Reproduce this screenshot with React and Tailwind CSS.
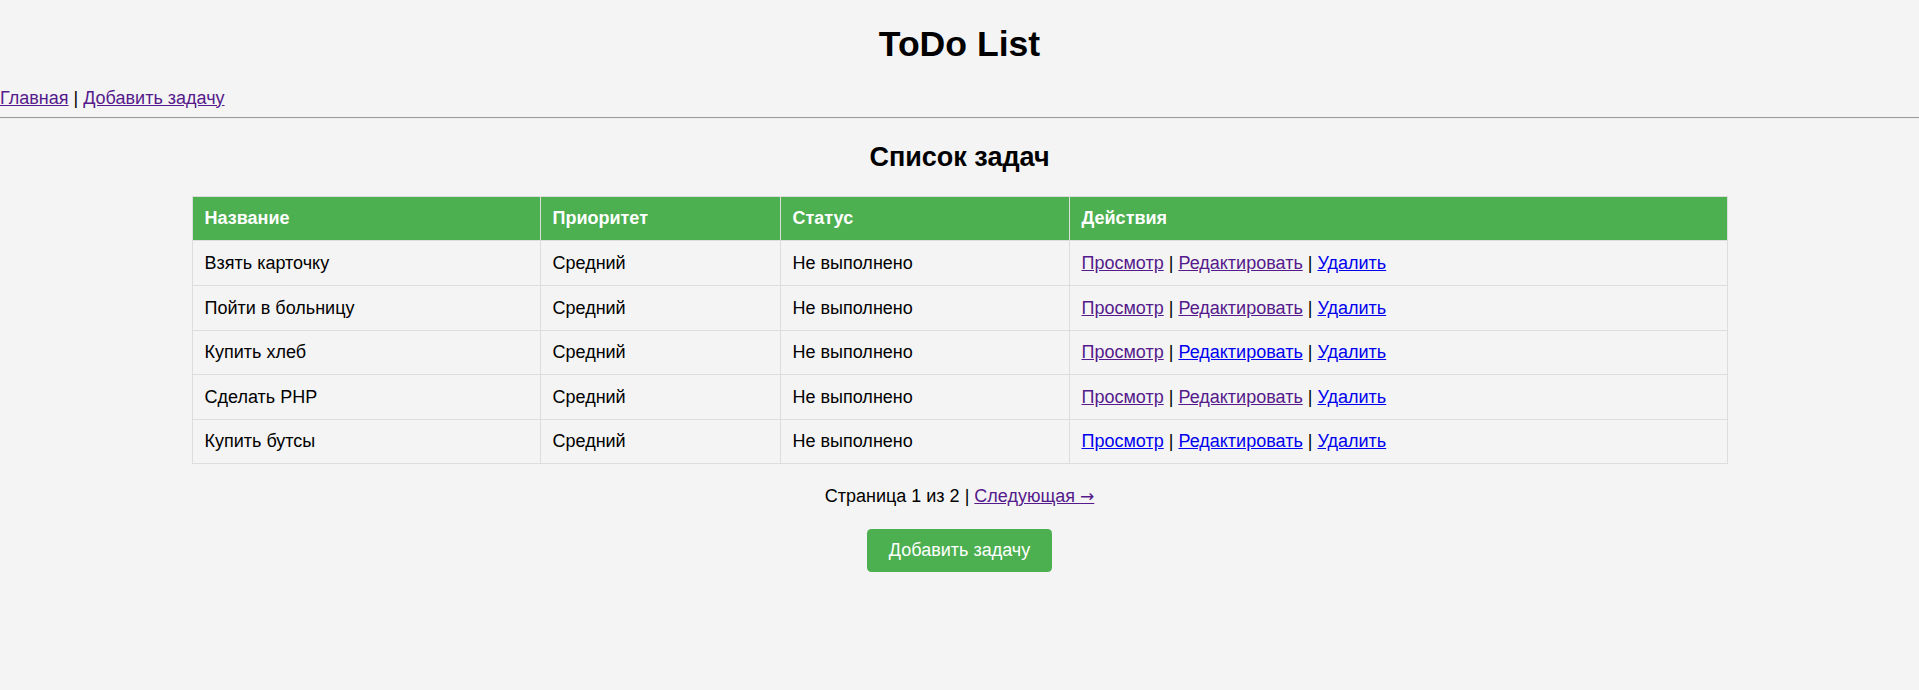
const tasks = [
  { name: 'Взять карточку', view: true, edit: true },
  { name: 'Пойти в больницу', view: true, edit: true },
  { name: 'Купить хлеб', view: true, edit: false },
  { name: 'Сделать PHP', view: true, edit: true },
  { name: 'Купить бутсы', view: false, edit: false },
];

const visited = 'text-[#551a8b] underline';
const fresh = 'text-[#0000ee] underline';
const cell = 'border border-[#dddddd] px-[12px] py-[11.7px]';

export default function App() {
  return (
    <div
      className="min-h-[690px] bg-[#f4f4f4] text-black text-[18px] leading-[20.2px]"
      style={{ fontFamily: '"Liberation Sans", Arial, sans-serif' }}
    >
      <div className="pt-[23.5px]">
        <h1 className="text-center text-[35.6px] leading-[40.5px] font-bold">ToDo List</h1>
      </div>

      {/* Nav */}
      <div className="mt-[23.5px]">
        <a href="#" className={visited}>Главная</a> |{' '}
        <a href="#" className={visited}>Добавить задачу</a>
      </div>
      <div className="mt-[8.8px] border-t border-t-[#9a9a9a] border-b border-b-[#eeeeee]" />

      <h2 className="mt-[23px] text-center text-[27px] leading-[30.3px] font-bold">Список задач</h2>

      {/* Table */}
      <table className="mt-[24px] mx-auto w-[1535px] border-collapse border border-[#dddddd] table-fixed">
        <colgroup>
          <col className="w-[348px]" />
          <col className="w-[240px]" />
          <col className="w-[289px]" />
          <col className="w-[658px]" />
        </colgroup>
        <thead>
          <tr className="bg-[#4caf50] text-white">
            {['Название', 'Приоритет', 'Статус', 'Действия'].map((h) => (
              <th key={h} className={`${cell} text-left font-bold`}>
                {h}
              </th>
            ))}
          </tr>
        </thead>
        <tbody>
          {tasks.map((t) => (
            <tr key={t.name}>
              <td className={cell}>{t.name}</td>
              <td className={cell}>Средний</td>
              <td className={cell}>Не выполнено</td>
              <td className={cell}>
                <a href="#" className={t.view ? visited : fresh}>Просмотр</a> |{' '}
                <a href="#" className={t.edit ? visited : fresh}>Редактировать</a> |{' '}
                <a href="#" className={fresh}>Удалить</a>
              </td>
            </tr>
          ))}
        </tbody>
      </table>

      {/* Pagination */}
      <div className="mt-[22px] text-center">
        Страница 1 из 2 |{' '}
        <a href="#" className={visited}>
          Следующая <span style={{ fontFamily: '"DejaVu Sans", sans-serif' }} className="text-[17px]">→</span>
        </a>
      </div>

      <div className="mt-[23px] flex justify-center">
        <button className="bg-[#4caf50] text-white rounded-[4.4px] px-[22px] py-[11px]">
          Добавить задачу
        </button>
      </div>
    </div>
  );
}
